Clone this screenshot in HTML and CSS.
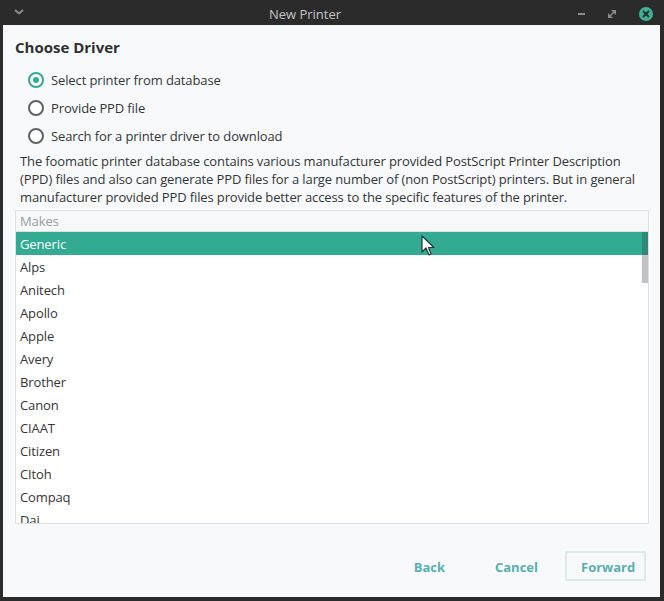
FILE: index.html
```html
<!DOCTYPE html>
<html>
<head>
<meta charset="utf-8">
<link rel="stylesheet" href="styles.css">
</head>
<body>
<div class="window">
  <div class="titlebar">
    <span class="tb-menu">
      <svg width="12" height="8" viewBox="0 0 12 8"><path d="M2 2 L6 5.5 L10 2" fill="none" stroke="#8a8a8a" stroke-width="2"/></svg>
    </span>
    <span class="tb-title">New Printer</span>
    <span class="tb-controls">
      <svg class="tb-min" width="10" height="4" viewBox="0 0 10 4"><rect x="1" y="1" width="7" height="2" fill="#8a8a8a"/></svg>
      <svg class="tb-max" width="10" height="10" viewBox="0 0 10 10"><path d="M1 4 L1 9 L6 9 Z M4 1 L9 1 L9 6 Z" fill="#8a8a8a"/><path d="M2 8 L8 2" stroke="#8a8a8a" stroke-width="1.6"/></svg>
      <span class="tb-close"><svg width="10" height="10" viewBox="0 0 10 10"><path d="M2 2 L8 8 M8 2 L2 8" stroke="#1f2d2a" stroke-width="1.8"/></svg></span>
    </span>
  </div>
  <div class="content">
    <h1 class="heading">Choose Driver</h1>
    <div class="radios">
      <label class="radio checked"><span class="dot"></span>Select printer from database</label>
      <label class="radio"><span class="dot"></span>Provide PPD file</label>
      <label class="radio"><span class="dot"></span>Search for a printer driver to download</label>
    </div>
    <p class="desc">The foomatic printer database contains various manufacturer provided PostScript Printer Description (PPD) files and also can generate PPD files for a large number of (non PostScript) printers. But in general manufacturer provided PPD files provide better access to the specific features of the printer.</p>
    <div class="list">
      <div class="list-head">Makes</div>
      <div class="list-body">
        <div class="rows">
          <div class="row selected">Generic<svg class="cursor" width="14" height="22" viewBox="0 0 14 22"><path d="M1 1 L1 17 L5 13 L8 20 L10 19 L7.5 12.5 L13 12.5 Z" fill="#ffffff" stroke="#1d3a35" stroke-width="1.2" stroke-linejoin="round"/></svg></div>
          <div class="row">Alps</div>
          <div class="row">Anitech</div>
          <div class="row">Apollo</div>
          <div class="row">Apple</div>
          <div class="row">Avery</div>
          <div class="row">Brother</div>
          <div class="row">Canon</div>
          <div class="row">CIAAT</div>
          <div class="row">Citizen</div>
          <div class="row">CItoh</div>
          <div class="row">Compaq</div>
          <div class="row">Dai</div>
        </div>
        <div class="scrollbar"><div class="thumb"></div></div>
      </div>
    </div>
    <div class="buttons">
      <button class="btn">Back</button>
      <button class="btn">Cancel</button>
      <button class="btn primary">Forward</button>
    </div>
  </div>
</div>
</body>
</html>
```
FILE: styles.css
```css
html, body {
  margin: 0;
  padding: 0;
  background: #2b2b2b;
}
body {
  width: 664px;
  height: 601px;
  overflow: hidden;
  font-family: "Open Sans", "Noto Sans", sans-serif;
}
.window {
  width: 664px;
  height: 601px;
  background: #2b2b2b;
  display: flex;
  flex-direction: column;
  padding: 0 4px 4px 3px;
  box-sizing: border-box;
}
.titlebar {
  height: 25px;
  flex: none;
  display: flex;
  align-items: center;
  position: relative;
  color: #c4c4c4;
  font-size: 13px;
}
.tb-menu {
  width: 24px;
  padding-left: 10px;
  display: flex;
  align-items: center;
  margin-top: -2px;
}
.tb-title {
  flex: 1;
  text-align: center;
  margin-top: 3px;
  padding-right: 4px;
}
.tb-controls {
  display: flex;
  align-items: center;
  gap: 20px;
  padding-right: 7px;
  margin-top: 2px;
}
.tb-close {
  width: 14px;
  height: 14px;
  border-radius: 50%;
  background: #3faf96;
  display: flex;
  align-items: center;
  justify-content: center;
  margin-left: 2px;
}
.content {
  flex: 1;
  background: #f8f9fa;
  padding: 0 11px 0 12px;
  display: flex;
  flex-direction: column;
  color: #333638;
  font-size: 13px;
  letter-spacing: -0.12px;
}
.heading {
  font-size: 15px;
  font-weight: bold;
  margin: 13px 0 0 0;
  line-height: 18px;
  color: #2e3133;
  letter-spacing: 0;
}
.radios {
  display: flex;
  flex-direction: column;
  padding-left: 13px;
  margin-top: 10px;
}
.radio {
  display: flex;
  align-items: center;
  height: 28px;
  font-size: 13px;
}
.dot {
  width: 12px;
  height: 12px;
  border: 2px solid #5e6366;
  border-radius: 50%;
  margin-right: 7px;
  box-sizing: content-box;
  position: relative;
  background: #fff;
}
.radio.checked .dot {
  border-color: #33aa92;
}
.radio.checked .dot::after {
  content: "";
  position: absolute;
  left: 3px;
  top: 3px;
  width: 6px;
  height: 6px;
  border-radius: 50%;
  background: #33aa92;
}
.desc {
  margin: 2px 0 0 5px;
  line-height: 18px;
  font-size: 13px;
}
.list {
  margin-top: 4px;
  border: 1px solid #dfe1e2;
  background: #fff;
  height: 314px;
  box-sizing: border-box;
  display: flex;
  flex-direction: column;
  overflow: hidden;
}
.list-head {
  height: 20px;
  flex: none;
  line-height: 20px;
  padding-left: 4px;
  color: #9a9d9f;
  background: #f8f9fa;
  border-bottom: 1px solid #dfe1e2;
}
.list-body {
  flex: 1;
  display: flex;
  overflow: hidden;
  position: relative;
}
.rows {
  flex: 1;
}
.row {
  height: 23px;
  line-height: 24px;
  padding-left: 4px;
  position: relative;
}
.row.selected {
  background: #33aa92;
  color: #ffffff;
  margin-right: -6px;
}
.cursor {
  position: absolute;
  left: 405px;
  top: 3px;
}
.scrollbar {
  width: 6px;
  flex: none;
  position: relative;
  z-index: 1;
}
.thumb {
  margin-top: 0;
  height: 51px;
  background: linear-gradient(#2e8a78 0 23px, #c1c4c6 23px);
}
.buttons {
  display: flex;
  justify-content: flex-end;
  align-items: center;
  gap: 11px;
  margin-top: 27px;
  padding-right: 3px;
}
.btn {
  font-family: inherit;
  font-size: 13px;
  font-weight: bold;
  color: #58b0b0;
  background: transparent;
  border: 2px solid transparent;
  height: 30px;
  padding: 2px 14px 0;
}
.btn.primary {
  border-color: #dceaea;
  width: 81px;
}
.btn:first-child { margin-right: 7px; }
```
